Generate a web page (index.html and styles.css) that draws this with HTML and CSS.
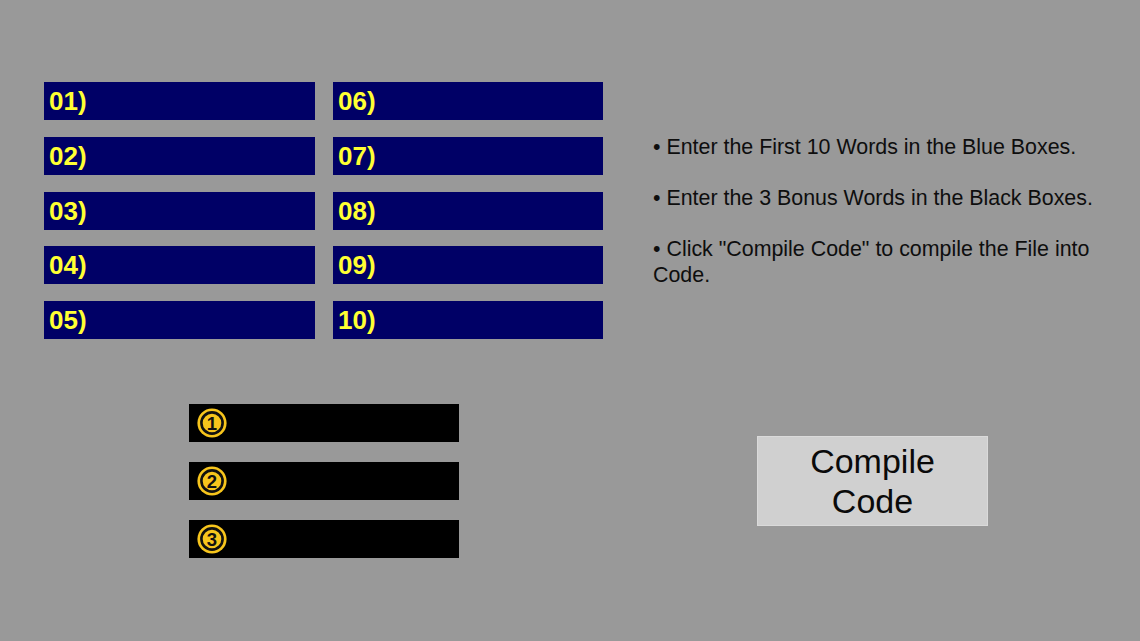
FILE: index.html
```html
<!DOCTYPE html>
<html>
<head>
<meta charset="utf-8">
<link rel="stylesheet" href="styles.css">
</head>
<body>
<div class="page">
  <div class="top">
    <div class="grid">
      <div class="word">01)</div>
      <div class="word">06)</div>
      <div class="word">02)</div>
      <div class="word">07)</div>
      <div class="word">03)</div>
      <div class="word">08)</div>
      <div class="word">04)</div>
      <div class="word">09)</div>
      <div class="word">05)</div>
      <div class="word">10)</div>
    </div>
    <div class="help">
      <p>• Enter the First 10 Words in the Blue Boxes.</p>
      <p>• Enter the 3 Bonus Words in the Black Boxes.</p>
      <p>• Click "Compile Code" to compile the File into Code.</p>
    </div>
  </div>
  <div class="bottom">
    <div class="bonus">
      <div class="bonus-box">
        <svg class="num" width="30" height="30" viewBox="0 0 30 30"><circle cx="15" cy="15" r="14.6" fill="#f7c51c"/><circle cx="15" cy="15" r="10.6" fill="none" stroke="#111" stroke-width="2.6"/><text x="15" y="21.5" text-anchor="middle" class="num-t">1</text></svg>
      </div>
      <div class="bonus-box">
        <svg class="num" width="30" height="30" viewBox="0 0 30 30"><circle cx="15" cy="15" r="14.6" fill="#f7c51c"/><circle cx="15" cy="15" r="10.6" fill="none" stroke="#111" stroke-width="2.6"/><text x="15" y="21.5" text-anchor="middle" class="num-t">2</text></svg>
      </div>
      <div class="bonus-box">
        <svg class="num" width="30" height="30" viewBox="0 0 30 30"><circle cx="15" cy="15" r="14.6" fill="#f7c51c"/><circle cx="15" cy="15" r="10.6" fill="none" stroke="#111" stroke-width="2.6"/><text x="15" y="21.5" text-anchor="middle" class="num-t">3</text></svg>
      </div>
    </div>
    <div class="compile">Compile<br>Code</div>
  </div>
</div>
</body>
</html>
```
FILE: styles.css
```css
html, body {
  margin: 0;
  padding: 0;
  background: #999999;
}
body {
  width: 1140px;
  height: 641px;
  overflow: hidden;
  font-family: "Liberation Sans", Arial, sans-serif;
}
.page {
  padding: 82px 0 0 44px;
}
.top {
  display: flex;
  align-items: flex-start;
}
.grid {
  display: grid;
  grid-template-columns: 271px 270px;
  grid-auto-rows: 38px;
  column-gap: 18px;
  row-gap: 16.75px;
}
.word {
  background: #000066;
  color: #ffff33;
  font-weight: bold;
  font-size: 26px;
  line-height: 38px;
  padding-left: 5px;
}
.help {
  margin-left: 50px;
  padding-top: 52px;
  width: 460px;
  font-size: 21.4px;
  line-height: 26px;
  color: #0e0e0e;
}
.help p {
  margin: 0 0 25px 0;
}
.bottom {
  display: flex;
  align-items: flex-start;
  margin-top: 65px;
  padding-left: 145px;
}
.bonus {
  display: flex;
  flex-direction: column;
  gap: 20px;
}
.bonus-box {
  width: 270px;
  height: 38px;
  background: #000;
  display: flex;
  align-items: center;
}
.num {
  margin-left: 8px;
  display: block;
}
.num-t {
  font-family: "Liberation Sans", Arial, sans-serif;
  font-weight: bold;
  font-size: 18.5px;
  fill: #111;
}
.compile {
  margin-left: 298px;
  margin-top: 32px;
  width: 229px;
  height: 88px;
  background: #d0d0d0;
  border: 1px solid #dadada;
  display: flex;
  align-items: center;
  justify-content: center;
  text-align: center;
  font-size: 34px;
  line-height: 40px;
  color: #0a0a0a;
}
```
